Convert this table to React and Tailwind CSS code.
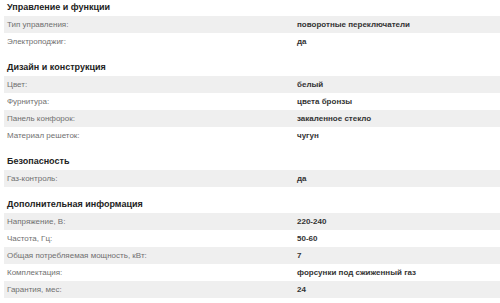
import React from 'react';

const sections = [
    {
        title: 'Управление и функции',
        rows: [
            ['Тип управления:', 'поворотные переключатели'],
            ['Электроподжиг:', 'да'],
        ],
    },
    {
        title: 'Дизайн и конструкция',
        rows: [
            ['Цвет:', 'белый'],
            ['Фурнитура:', 'цвета бронзы'],
            ['Панель конфорок:', 'закаленное стекло'],
            ['Материал решеток:', 'чугун'],
        ],
    },
    {
        title: 'Безопасность',
        rows: [['Газ-контроль:', 'да']],
    },
    {
        title: 'Дополнительная информация',
        rows: [
            ['Напряжение, В:', '220-240'],
            ['Частота, Гц:', '50-60'],
            ['Общая потребляемая мощность, кВт:', '7'],
            ['Комплектация:', 'форсунки под сжиженный газ'],
            ['Гарантия, мес:', '24'],
        ],
    },
];

const App = () => {
    return (
        <div className="w-[500px] h-[303px] bg-white overflow-hidden font-['Liberation_Sans',Arial,sans-serif]">
            {sections.map((section, i) => (
                <div key={section.title} className={i > 0 ? 'mt-[10px]' : ''}>
                    <div className="h-4 pl-[7px] flex items-center text-[9px] font-bold text-[#222]">
                        {section.title}
                    </div>
                    <div className="ml-1">
                        {section.rows.map(([label, value], j) => (
                            <div
                                key={label}
                                className={`h-[17px] flex items-center text-[8px] ${j % 2 === 0 ? 'bg-[#efefef]' : 'bg-white'}`}
                            >
                                <span className="w-[293px] pl-[3px] text-[#707070]">{label}</span>
                                <span className="font-bold text-[#333]">{value}</span>
                            </div>
                        ))}
                    </div>
                </div>
            ))}
        </div>
    );
};

export default App;
